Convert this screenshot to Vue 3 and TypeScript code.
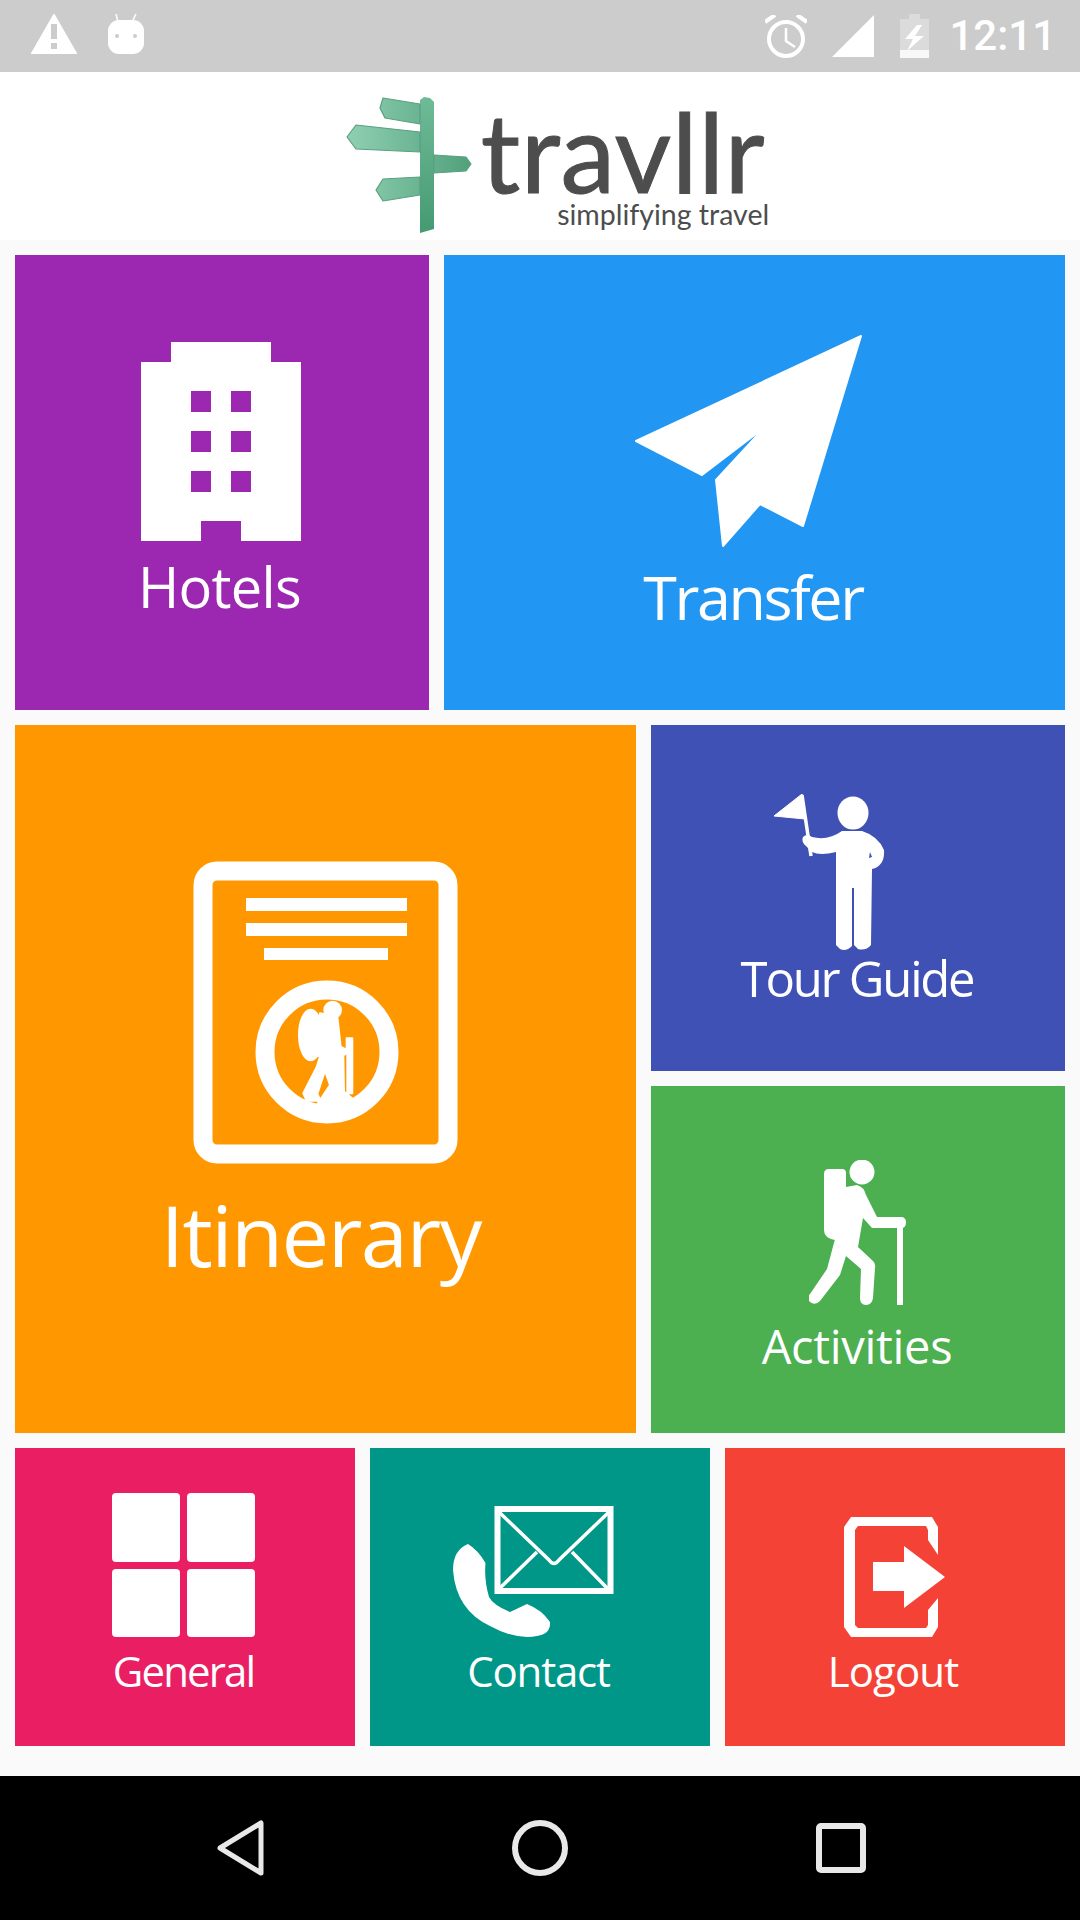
<template>
  <div class="phone">
    <!-- Status bar -->
    <div class="status-bar">
      <div class="status-left">
        <svg width="46" height="40" viewBox="31 15 46 40">
          <path d="M54 15 L77 55 H31 Z" fill="#fff" stroke="#fff" stroke-width="1" stroke-linejoin="round" />
          <rect x="51" y="25" width="6" height="15" fill="#ccc" />
          <rect x="51" y="44" width="6" height="6" fill="#ccc" />
        </svg>
        <svg width="36" height="40" viewBox="108 13 36 40">
          <path d="M118 21 L116 13 M132 21 L136 13" stroke="#fff" stroke-width="1.5" />
          <rect x="108" y="19" width="36" height="34" rx="11" fill="#fff" />
          <circle cx="117" cy="35" r="2" fill="#ccc" />
          <circle cx="135" cy="35" r="2" fill="#ccc" />
        </svg>
      </div>
      <div class="status-right">
        <svg width="42" height="43" viewBox="766 15 42 43" fill="none" stroke="#fff">
          <circle cx="787" cy="39" r="17" stroke-width="4" />
          <path d="M787 28 V41 L796 47" stroke-width="2.5" />
          <path d="M766 22 L776 15 M798 15 L808 22" stroke-width="4" />
        </svg>
        <svg width="42" height="42" viewBox="831 15 42 42">
          <path d="M873 15 V57 H831 Z" fill="#fff" />
        </svg>
        <svg width="29" height="44" viewBox="899 14 29 44">
          <path d="M908 14 H919 V19 H928 V50 H899 V19 H908 Z" fill="#fff" fill-opacity=".3" />
          <rect x="899" y="50" width="29" height="8" fill="#fff" fill-opacity=".85" />
          <path d="M916 25 H921 L914 36 H923 L906 51 L912 39 H904 Z" fill="#fff" />
        </svg>
        <span class="clock">{{ clock }}</span>
      </div>
    </div>

    <!-- Header -->
    <div class="app-header">
      <div class="logo">
        <svg width="126" height="137" viewBox="348 97 126 137">
          <defs>
            <linearGradient id="signFill" x1="348" y1="0" x2="474" y2="0" gradientUnits="userSpaceOnUse">
              <stop offset="0" stop-color="#90d0b2" />
              <stop offset="1" stop-color="#50a07b" />
            </linearGradient>
            <linearGradient id="postFill" x1="0" y1="97" x2="0" y2="233" gradientUnits="userSpaceOnUse">
              <stop offset="0" stop-color="#6fbb97" />
              <stop offset="1" stop-color="#459a72" />
            </linearGradient>
          </defs>
          <path d="M422 100 L426 97 L432 98 L436 102 V229 L422 233 Z" fill="url(#postFill)" />
          <g fill="url(#signFill)" stroke="#5a9f80" stroke-width="1.2" stroke-linejoin="round">
            <path d="M385 98 L422 104 V124 L387 118 L382 108 Z" />
            <path d="M358 125 L422 132 V152 L358 149 L349 137 Z" />
            <path d="M436 155 L468 157 L473 164 L468 171 L436 173 Z" />
            <path d="M385 179 L422 177 V195 L385 201 L378 190 Z" />
          </g>
        </svg>
        <div class="logo-text">
          <div class="logo-name">travllr</div>
          <div class="logo-tag">simplifying travel</div>
        </div>
      </div>
    </div>

    <!-- Tiles -->
    <div class="tiles">
      <div class="tile-row wide-right">
        <div class="tile hotels">
          <svg width="160" height="199" viewBox="141 342 160 199">
            <path
              fill="#fff"
              fill-rule="evenodd"
              d="M171 342 H271 V362 H301 V541 H241 V521 H201 V541 H141 V362 H171 Z
                 M191 391 V412 H211 V391 Z M231 391 V412 H251 V391 Z
                 M191 431 V452 H211 V431 Z M231 431 V452 H251 V431 Z
                 M191 471 V492 H211 V471 Z M231 471 V492 H251 V471 Z"
            />
          </svg>
          <span class="tile-label">Hotels</span>
        </div>
        <div class="tile transfer">
          <svg width="230" height="214" viewBox="632 334 230 214">
            <path
              fill="#fff"
              stroke="#fff"
              stroke-width="2"
              stroke-linejoin="round"
              d="M860 336 L802 526 L759 504 L722 546 L715 480 L764 427 L701 475 L635 441 Z"
            />
          </svg>
          <span class="tile-label">Transfer</span>
        </div>
      </div>

      <div class="tile-row wide-left">
        <div class="tile itinerary">
          <svg width="265" height="303" viewBox="193 861 265 303">
            <rect x="203" y="871" width="245" height="283" rx="14" fill="none" stroke="#fff" stroke-width="19" />
            <rect x="246" y="898" width="161" height="13" fill="#fff" />
            <rect x="246" y="923" width="161" height="13" fill="#fff" />
            <rect x="264" y="948" width="124" height="12" fill="#fff" />
            <circle cx="327" cy="1052" r="62" fill="none" stroke="#fff" stroke-width="19" />
            <g transform="translate(140 840) scale(.3333)" fill="#fff" stroke="#fff" stroke-width="6" stroke-linejoin="round">
              <circle cx="578" cy="510" r="25" />
              <ellipse cx="512" cy="585" rx="35" ry="76" />
              <path d="M540 520 L592 530 L602 620 L620 630 V595 H637 V760 H622 V640 L610 645 L612 755 L636 775 L610 792 L530 796 L570 735 L555 692 L532 762 L542 782 L500 782 L490 760 L530 682 L540 650 L520 640 Z" />
            </g>
          </svg>
          <span class="tile-label">Itinerary</span>
        </div>
        <div class="tile-stack">
          <div class="tile guide">
            <svg width="112" height="157" viewBox="773 794 112 157">
              <path d="M802 794 L774 816 L805 819 Z" fill="#fff" stroke="#fff" stroke-linejoin="round" />
              <path d="M802 795 L811 856" stroke="#fff" stroke-width="3.5" fill="none" />
              <ellipse cx="853" cy="813" rx="15.5" ry="16.5" fill="#fff" />
              <path
                fill="#fff"
                fill-rule="evenodd"
                d="M842 831 H862 Q878 836 884 850 Q885 866 872 869 L871 945 Q866 951 858 949 L854 945 V888 H852 V946 Q846 952 840 949 L836 945 V852 Q820 856 812 852 L806 846 Q801 842 803 837 Q807 833 812 837 Q828 841 842 831 Z
                   M870 852 L872 857 L869 858 Z"
              />
            </svg>
            <span class="tile-label">Tour Guide</span>
          </div>
          <div class="tile activities">
            <svg width="98" height="146" viewBox="809 1160 98 146">
              <ellipse cx="862" cy="1172" rx="12.5" ry="12.5" fill="#fff" />
              <path d="M829 1169 H842 Q846 1169 846 1173 V1240 L835 1240 Q824 1238 824 1230 V1174 Q824 1169 829 1169 Z" fill="#fff" />
              <path
                fill="#fff"
                d="M846 1187 L857 1185 Q864 1187 866 1195 L877 1217 H901 Q906 1217 906 1222.5 Q906 1228 901 1228 H872 L863 1218 L858 1247 L873 1261 Q876 1264 875 1268 L873 1298 Q872 1305 866 1305 Q860 1305 860 1298 L861 1269 L846 1256 L840 1275 L820 1301 Q815 1306 810 1302 Q806 1298 810 1294 L827 1269 L835 1239 Z"
              />
              <rect x="897" y="1226" width="6" height="79" fill="#fff" />
            </svg>
            <span class="tile-label">Activities</span>
          </div>
        </div>
      </div>

      <div class="tile-row thirds">
        <div class="tile general">
          <svg width="143" height="144" viewBox="112 1493 143 144" fill="#fff">
            <rect x="112" y="1493" width="68" height="69" rx="4" />
            <rect x="187" y="1493" width="68" height="69" rx="4" />
            <rect x="112" y="1569" width="68" height="68" rx="4" />
            <rect x="187" y="1569" width="68" height="68" rx="4" />
          </svg>
          <span class="tile-label">General</span>
        </div>
        <div class="tile contact">
          <svg width="161" height="131" viewBox="453 1506 161 131">
            <rect x="497.5" y="1509" width="113" height="82" fill="none" stroke="#fff" stroke-width="6" />
            <path d="M499 1512 L549 1560 Q554 1567 559 1560 L609 1512 M537 1552 L499 1589 M572 1552 L608 1589" fill="none" stroke="#fff" stroke-width="3.5" />
            <path
              fill="#fff"
              d="M468 1544 Q453 1550 453 1570 Q456 1610 490 1626 Q515 1640 537 1636 Q551 1634 550 1622 Q542 1610 527 1604 L510 1612 Q493 1605 489 1597 Q484 1580 485.5 1563 Q478 1550 468 1544 Z"
            />
          </svg>
          <span class="tile-label">Contact</span>
        </div>
        <div class="tile logout">
          <svg width="101" height="120" viewBox="844 1517 101 120" fill="#fff">
            <path d="M851 1517 H932 L938 1527 V1555 L928 1540 V1530 L926 1526 H858 L855 1530 V1625 L858 1628 H926 L928 1625 V1610 L938 1598 V1627 L932 1637 H851 L844 1627 V1527 Z" />
            <path d="M873 1562 H904 V1546 L945 1577 L904 1608 V1591 H873 Z" />
          </svg>
          <span class="tile-label">Logout</span>
        </div>
      </div>
    </div>

    <!-- Nav bar -->
    <div class="nav-bar">
      <svg width="47" height="56" viewBox="217 1820 47 56" fill="none" stroke="#e8e8e8" stroke-width="5" stroke-linejoin="round">
        <path d="M261 1823 V1873 L220 1848 Z" />
      </svg>
      <svg width="56" height="56" viewBox="0 0 56 56" fill="none" stroke="#e8e8e8" stroke-width="6">
        <circle cx="28" cy="28" r="25" />
      </svg>
      <svg width="50" height="50" viewBox="0 0 50 50" fill="none" stroke="#e8e8e8" stroke-width="6">
        <rect x="3" y="3" width="44" height="44" rx="2" />
      </svg>
    </div>
  </div>
</template>

<script setup lang="ts">
const clock = '12:11';
</script>

<style>
html,
body {
  margin: 0;
  background: #fafafa;
}
</style>

<style scoped>
.phone {
  width: 1080px;
  height: 1920px;
  display: flex;
  flex-direction: column;
  background: #fafafa;
  font-family: "Open Sans", "Noto Sans", sans-serif;
  overflow: hidden;
}

svg {
  display: block;
  flex-shrink: 0;
}

/* Status bar */
.status-bar {
  height: 72px;
  flex-shrink: 0;
  background: #ccc;
  display: flex;
  justify-content: space-between;
  padding: 0 24px 0 31px;
  box-sizing: border-box;
}

.status-left {
  display: flex;
  gap: 31px;
  align-items: flex-start;
  padding-top: 14px;
}

.status-right {
  display: flex;
  align-items: center;
}

.status-right svg:nth-child(2) {
  margin-left: 25px;
}

.status-right svg:nth-child(3) {
  margin-left: 26px;
}

.clock {
  margin-left: 20px;
  font-family: Roboto, sans-serif;
  font-size: 42px;
  font-weight: 500;
  line-height: 72px;
  color: #fff;
}

/* Header */
.app-header {
  height: 168px;
  flex-shrink: 0;
  background: #fff;
  display: flex;
  justify-content: center;
}

.logo {
  display: flex;
  margin-left: 31px;
  padding-top: 25px;
  gap: 9px;
}

.logo-text {
  font-family: Lato, sans-serif;
  color: #4d4d4d;
  text-align: right;
}

.logo-name {
  font-size: 110px;
  line-height: 90px;
  letter-spacing: .5px;
  -webkit-text-stroke: 1px #4d4d4d;
  margin-top: 8px;
}

.logo-tag {
  font-size: 28.5px;
  line-height: 1;
  margin: 5px -4px 0 0;
}

/* Tiles */
.tiles {
  flex: 1;
  padding: 15px;
  display: grid;
  grid-template-rows: 455px 708px 298px;
  gap: 15px;
  align-content: start;
}

.tile-row {
  display: grid;
  gap: 15px;
}

.wide-right {
  grid-template-columns: 2fr 3fr;
}

.wide-left {
  grid-template-columns: 3fr 2fr;
}

.thirds {
  grid-template-columns: repeat(3, 1fr);
}

.tile-stack {
  display: grid;
  grid-template-rows: 346px 347px;
  gap: 15px;
}

.tile {
  display: flex;
  flex-direction: column;
  align-items: center;
  color: #fff;
}

.tile-label {
  line-height: 1;
  white-space: nowrap;
}

.hotels {
  background: #9c27b0;
  padding-top: 87px;
}

.hotels svg {
  margin-left: -2px;
}

.hotels .tile-label {
  font-size: 56px;
  letter-spacing: -0.7px;
  margin: 17px 0 0 -5px;
}

.transfer {
  background: #2196f3;
  padding-top: 79px;
}

.transfer svg {
  margin-left: -14px;
}

.transfer .tile-label {
  font-size: 61px;
  letter-spacing: -2.4px;
  margin: 18px 0 0 -3px;
}

.itinerary {
  background: #ff9800;
  padding-top: 136px;
}

.itinerary .tile-label {
  font-size: 85px;
  letter-spacing: -1.6px;
  margin: 28px 0 0 -10px;
}

.guide {
  background: #3f51b5;
  padding-top: 69px;
}

.guide svg {
  margin-left: -58px;
}

.guide .tile-label {
  font-size: 49px;
  letter-spacing: -2.2px;
  margin: 3px 0 0 -2px;
}

.activities {
  background: #4caf50;
  padding-top: 74px;
}

.activities .tile-label {
  font-size: 47px;
  letter-spacing: -0.3px;
  margin: 17px 0 0 -2px;
}

.general {
  background: #e91e63;
  padding-top: 45px;
}

.general svg {
  margin-left: -3px;
}

.contact {
  background: #009688;
  padding-top: 58px;
}

.contact svg {
  margin-left: -13px;
}

.logout {
  background: #f44336;
  padding-top: 69px;
}

.logout svg {
  margin-left: -2px;
}

.general .tile-label,
.contact .tile-label,
.logout .tile-label {
  font-size: 42px;
  margin-top: 13px;
}

.general .tile-label {
  letter-spacing: -1.9px;
  margin-left: -3px;
}

.contact .tile-label {
  letter-spacing: -1.2px;
  margin-left: -3px;
}

.logout .tile-label {
  letter-spacing: -0.9px;
  margin-left: -4px;
}

/* Nav bar */
.nav-bar {
  height: 144px;
  flex-shrink: 0;
  background: #000;
  display: flex;
  align-items: center;
  justify-content: center;
  gap: 248px;
  padding-left: 2px;
}
</style>
